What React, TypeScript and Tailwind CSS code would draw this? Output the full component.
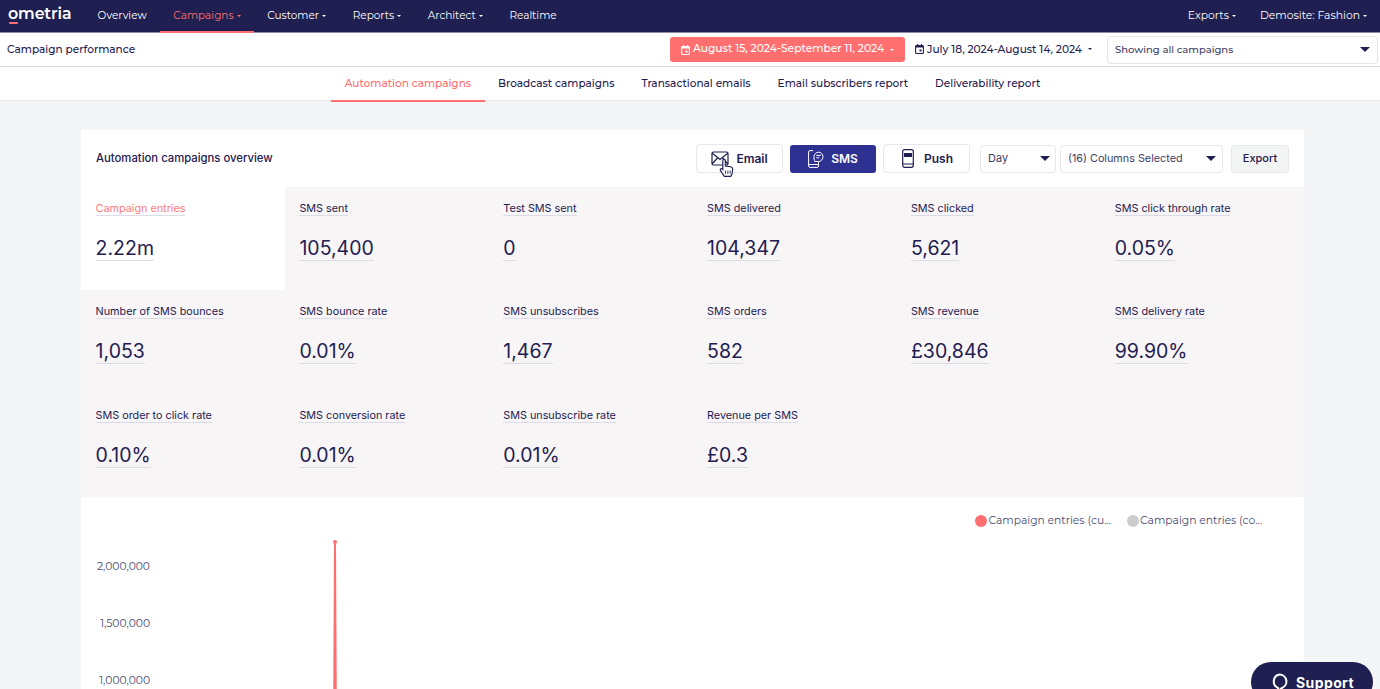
import React from "react";

const mont = "font-['Montserrat','Inter','Liberation_Sans',sans-serif]";

function Caret({ className = "" }: { className?: string }) {
  return <span className={`inline-block ml-[3px] align-middle w-0 h-0 border-l-[2.500px] border-r-[2.500px] border-t-[2.500px] border-l-transparent border-r-transparent border-t-current ${className}`} />;
}

function Cal({ color }: { color: string }) {
  return (
    <svg width="9" height="10" viewBox="0 0 9 10" className="shrink-0">
      <rect x="0.600" y="1.500" width="7.800" height="8" rx="1" fill="none" stroke={color} strokeWidth="1.100" />
      <rect x="0.600" y="1.500" width="7.800" height="2" fill={color} />
      <rect x="2" y="0" width="1" height="2" fill={color} />
      <rect x="6" y="0" width="1" height="2" fill={color} />
      <rect x="4.500" y="5.500" width="2" height="2" fill={color} />
    </svg>
  );
}

function Chevron() {
  return <span className="w-0 h-0 border-l-[5px] border-r-[5px] border-t-[5px] border-l-transparent border-r-transparent border-t-[#1f2051]" />;
}

const navItems: [string, boolean][] = [
  ["Overview", false],
  ["Campaigns", true],
  ["Customer", true],
  ["Reports", true],
  ["Architect", true],
  ["Realtime", false],
];

const tabs = ["Automation campaigns", "Broadcast campaigns", "Transactional emails", "Email subscribers report", "Deliverability report"];

const tiles: [string, string][] = [
  ["Campaign entries", "2.22m"],
  ["SMS sent", "105,400"],
  ["Test SMS sent", "0"],
  ["SMS delivered", "104,347"],
  ["SMS clicked", "5,621"],
  ["SMS click through rate", "0.05%"],
  ["Number of SMS bounces", "1,053"],
  ["SMS bounce rate", "0.01%"],
  ["SMS unsubscribes", "1,467"],
  ["SMS orders", "582"],
  ["SMS revenue", "£30,846"],
  ["SMS delivery rate", "99.90%"],
  ["SMS order to click rate", "0.10%"],
  ["SMS conversion rate", "0.01%"],
  ["SMS unsubscribe rate", "0.01%"],
  ["Revenue per SMS", "£0.3"],
];

function EmailIcon() {
  return (
    <svg width="18" height="15" viewBox="0 0 18 15" fill="none" stroke="#1f2051" strokeWidth="1.200">
      <rect x="1" y="1" width="16" height="13" rx="1.500" />
      <path d="M1 2l8 6.500L17 2M1 13l5.500-6M17 13l-5.500-6" />
    </svg>
  );
}

function SmsIcon() {
  return (
    <svg width="16" height="18" viewBox="0 0 16 18" fill="none" stroke="#fff" strokeWidth="1">
      <path d="M5 0.600H2A1.500 1.500 0 0 0 0.600 2v14A1.500 1.500 0 0 0 2 17.400h7A1.500 1.500 0 0 0 10.500 16v-4" />
      <path d="M0.600 14.500h9.900" />
      <path d="M10.500 2.200a4.500 4.500 0 0 1 4.500 4.500c0 2.600-2 4.800-4.500 4.800H6.800c0-1-.8-1.200-.8-2.500V6.700a4.500 4.500 0 0 1 4.500-4.500z" />
      <path d="M8.300 5.400h4.500M8.300 7.800h3" />
    </svg>
  );
}

function PushIcon() {
  return (
    <svg width="12" height="19" viewBox="0 0 12 19">
      <rect x="0.700" y="0.700" width="10.600" height="17.600" rx="2" fill="none" stroke="#1f2051" strokeWidth="1.200" />
      <rect x="2" y="4" width="8" height="4" fill="#1f2051" />
      <path d="M1 15h10" stroke="#1f2051" strokeWidth="1" />
    </svg>
  );
}

export default function App() {
  return (
    <div className="relative h-[689px] w-full overflow-hidden bg-[#f4f5f7] text-[#1f2051] font-['Inter',sans-serif]">
      {/* top nav */}
      <nav className={`h-[33px] bg-[#1f2051] border-b border-[#8c8ca8] flex items-start justify-between pr-[13px] pl-[8px] ${mont}`}>
        <div className="flex items-start h-[32px]">
          <div className="relative w-[63px] h-[32px] mr-[13.250px]">
            <span className="absolute left-0 top-[2px] text-[15.800px] leading-[24px] font-semibold tracking-[-0.100px] text-white">ometria</span>
            <span className="absolute left-[1px] top-[22px] w-[9px] h-[2px] rounded-full bg-[#ff6f6f]" />
          </div>
          {navItems.map(([label, caret]) => {
            const active = label === "Campaigns";
            return (
              <div
                key={label}
                className={`h-[33px] px-[13.350px] text-[10.500px] leading-[32px] border-b-2 whitespace-nowrap ${active ? "text-[#ff6f6f] border-[#ff6f6f]" : "text-white border-transparent"}`}
              >
                {label}
                {caret && <Caret />}
              </div>
            );
          })}
        </div>
        <div className="flex items-start text-white text-[10.800px] leading-[32px] gap-[24px]">
          <div>Exports<Caret /></div>
          <div>Demosite: Fashion<Caret /></div>
        </div>
      </nav>

      {/* sub header */}
      <div className={`h-[34px] bg-white border-b border-[#d9d9d9] flex items-center pl-[7px] pr-[2px] ${mont}`}>
        <div className="text-[10.550px] font-medium flex-1 pt-[1px]">Campaign performance</div>
        <div className="h-[25px] w-[235px] rounded-[3px] bg-[#ff6f6f] text-white text-[10.700px] font-medium flex items-center pl-[11px] gap-[3px] whitespace-nowrap">
          <Cal color="#fff" />
          <span>August 15, 2024-September 11, 2024</span>
          <Caret />
        </div>
        <div className="w-[202px] pl-[10px] text-[10.600px] font-medium flex items-center gap-[3px] whitespace-nowrap">
          <Cal color="#1f2051" />
          <span>July 18, 2024-August 14, 2024</span>
          <Caret />
        </div>
        <div className="w-[271px] h-[28px] rounded-[4px] border border-[#e5e5e5] bg-white flex items-center justify-between pl-[7px] pr-[7px] text-[10px] font-medium text-[#3c3d66]">
          <span>Showing all campaigns</span>
          <Chevron />
        </div>
      </div>

      {/* tabs */}
      <div className={`h-[34px] bg-white border-b border-[#e5e7eb] flex justify-center pl-[5px] text-[10.530px] font-medium ${mont}`}>
        {tabs.map((t, i) => (
          <div key={t} className={`h-[35px] px-[13.500px] leading-[34px] border-b-2 whitespace-nowrap ${i === 0 ? "text-[#ff6f6f] border-[#ff6f6f]" : "border-transparent"}`}>{t}</div>
        ))}
      </div>

      {/* card */}
      <div className="mx-[81px] mt-[29px] w-[1223px] bg-white">
        <div className="h-[57px] flex items-center pl-[15px] pr-[15px]">
          <div className="text-[11.300px] font-medium flex-1">Automation campaigns overview</div>
          <div className="flex items-center gap-[7px]">
            <button className="relative w-[87px] h-[29px] rounded-[4px] border border-[#e5e7eb] bg-white flex items-center justify-center gap-[7px] text-[12px] font-semibold">
              <EmailIcon />
              <span>Email</span>
              <svg width="17" height="20" viewBox="0 0 15 19" className="absolute left-[21px] top-[13px]">
                <path d="M4 9V2.500a1.200 1.200 0 0 1 2.400 0V7.500l5 .8c1.300.3 2 1 2 2.200l-.4 3.500c-.2 1.500-1 2.500-1.500 3.500H5.500L1.800 12c-.8-1.200.4-2.500 1.500-1.700L4 11z" fill="#fff" stroke="#1f2051" strokeWidth="1.100" />
                <path d="M6.500 12v3M8.800 12v3M11 12v3" stroke="#1f2051" strokeWidth="0.900" />
              </svg>
            </button>
            <button className="w-[86px] h-[28px] rounded-[3px] bg-[#2f3192] text-white flex items-center justify-center gap-[7px] text-[12px] font-semibold">
              <SmsIcon />
              <span>SMS</span>
            </button>
            <button className="w-[87px] h-[29px] rounded-[4px] border border-[#e5e7eb] bg-white flex items-center justify-center gap-[10px] pl-[2px] text-[12px] font-semibold">
              <PushIcon />
              <span>Push</span>
            </button>
          </div>
          <div className="ml-[10px] w-[76px] h-[28px] rounded-[4px] border border-[#e5e7eb] flex items-center justify-between pl-[7px] pr-[5px] text-[11px] text-[#3c3d66]">
            <span>Day</span><Chevron />
          </div>
          <div className="ml-[4px] w-[163px] h-[28px] rounded-[4px] border border-[#e5e7eb] flex items-center justify-between pl-[7px] pr-[6px] text-[10.800px] leading-[15px] text-[#3c3d66]">
            <span>(16) Columns Selected</span><Chevron />
          </div>
          <div className="ml-[8px] w-[58px] h-[28px] rounded-[3px] bg-[#f3f4f4] border border-[#e5e7eb] flex items-center justify-center text-[11px] font-medium">Export</div>
        </div>

        <div className="grid grid-cols-6 bg-[#f7f5f6]">
          {tiles.map(([label, value], i) => (
            <div key={label} className={`h-[103.400px] pl-[14.600px] pt-[14px] ${i === 0 ? "bg-white" : ""}`}>
              <div className="h-[14px] -mt-[7px]">
                <span className={`text-[10.800px] leading-[13px] inline-block border-b border-[#dcdce8] ${i === 0 ? "text-[#ff7b7b]" : ""}`}>{label}</span>
              </div>
              <div className="mt-[28px]">
                <span className="text-[19.500px] leading-[24px] inline-block border-b border-[#dcdce8]">{value}</span>
              </div>
            </div>
          ))}
        </div>

        {/* chart */}
        <div className={`relative h-[200px] bg-white ${mont}`}>
          <div className="flex justify-end gap-[16px] pr-[42px] pt-[16.500px] text-[10.750px] leading-[14px] text-[#4a4a72]">
            <div className="flex items-center gap-[1px]"><span className="w-[12px] h-[12px] rounded-full bg-[#ff6f6f]" />Campaign entries (cu...</div>
            <div className="flex items-center gap-[1px]"><span className="w-[12px] h-[12px] rounded-full bg-[#cccccc]" />Campaign entries (co...</div>
          </div>
          {[["2,000,000", 63], ["1,500,000", 120], ["1,000,000", 177]].map(([t, y]) => (
            <div key={t as string} className="absolute right-[1154px] text-[10.750px] leading-[14px] text-[#4a4a72]" style={{ top: y as number }}>{t}</div>
          ))}
          <svg className="absolute left-[250px] top-[42px]" width="8" height="160" viewBox="0 0 8 160">
            <circle cx="4" cy="3" r="2" fill="#ff6f6f" />
            <polygon points="3,3 5,3 5.800,160 2.200,160" fill="#ff6f6f" />
          </svg>
        </div>
      </div>

      {/* support */}
      <div className="absolute left-[1251px] top-[662px] w-[122px] h-[40px] rounded-[20px] bg-[#1f2051] text-white flex items-center pl-[20px] gap-[8px] text-[14px] font-bold tracking-[0.400px]">
        <svg width="17" height="19" viewBox="0 0 17 19" fill="none" stroke="#fff" strokeWidth="2" className="shrink-0">
          <path d="M8.500 1.500a7 7 0 0 1 2.500 13.500L7 18v-3.200A7 7 0 0 1 8.500 1.500z" />
        </svg>
        <span>Support</span>
      </div>
    </div>
  );
}
